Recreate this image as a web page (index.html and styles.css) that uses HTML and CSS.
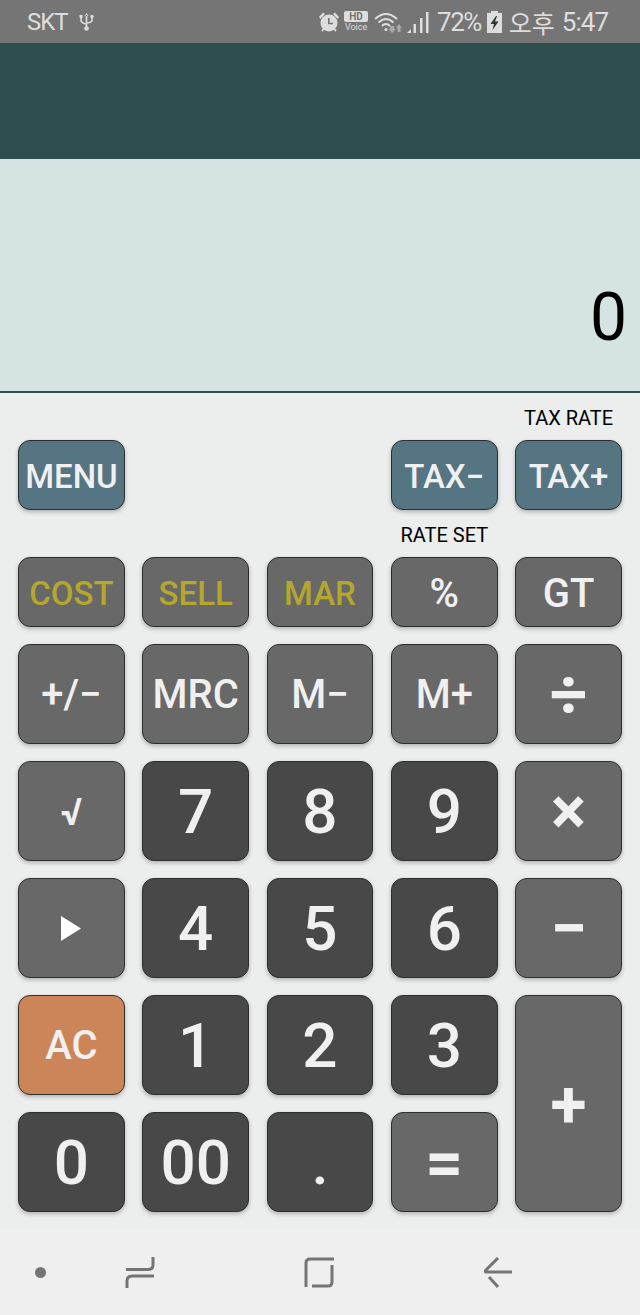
FILE: index.html
```html
<!DOCTYPE html>
<html lang="en">
<head>
  <meta charset="UTF-8" />
  <title>Tax Calculator</title>
  <link rel="stylesheet" href="styles.css">
</head>
<body>
  <div class="status-bar">
    <div class="status-left">
      <span class="carrier">SKT</span>
      <svg class="usb" width="15" height="20" viewBox="0 0 15 20">
        <path d="M7.5 1 L5.5 4 H9.5 Z M6.7 3 H8.3 V15 H6.7 Z" fill="#ddd"/>
        <circle cx="7.5" cy="16.5" r="2.3" fill="#ddd"/>
        <path d="M2 5 V8 Q2 11 7 12 M13 5 V8 Q13 10.500 8 11" fill="none" stroke="#ddd" stroke-width="1.600"/>
        <rect x="0.500" y="3" width="3" height="3" fill="#ddd"/>
        <circle cx="13" cy="4.500" r="1.700" fill="#ddd"/>
      </svg>
    </div>
    <div class="status-right">
      <svg class="alarm" width="22" height="22" viewBox="0 0 22 22">
        <circle cx="11" cy="12" r="8.500" fill="#ddd"/>
        <path d="M1 6 L5 1.500 L7 3 L2.500 8 Z M21 6 L17 1.500 L15 3 L19.500 8 Z M3.500 19 L5.500 17 L6.500 18 L4.500 21 Z M18.500 19 L16.500 17 L15.500 18 L17.500 21 Z" fill="#ddd"/>
        <path d="M10.800 7 V12.500 H15" fill="none" stroke="#757575" stroke-width="1.600"/>
      </svg>
      <div class="hd">
        <span class="hd-box">HD</span>
        <span class="hd-voice">Voice</span>
      </div>
      <svg class="wifi" width="28" height="22" viewBox="0 0 28 22">
        <path d="M1 8 Q12 -2 23 8 M4.500 11.500 Q12 4.500 19.500 11.500 M8 15 Q12 11 16 15" fill="none" stroke="#ddd" stroke-width="2"/>
        <circle cx="12" cy="18.500" r="1.600" fill="#ddd"/>
        <path d="M16 15 H20 V18 H22 L18 22 L14.500 18 H16 Z" fill="#aaa"/>
        <path d="M25 13 L28 17 H26.500 V21 H23.500 V17 H22 Z" fill="#aaa"/>
      </svg>
      <svg class="signal" width="22" height="22" viewBox="0 0 22 22">
        <path d="M0 22 L4 18 V22 Z" fill="#ddd"/>
        <rect x="6.500" y="13" width="2.500" height="9" fill="#ddd"/>
        <rect x="13" y="7" width="2.500" height="15" fill="#ddd"/>
        <rect x="19" y="1" width="2.500" height="21" fill="#ddd"/>
      </svg>
      <span class="battery-text">72%</span>
      <svg class="battery" width="15" height="22" viewBox="0 0 15 22">
        <path d="M4 0 H11 V2 H15 V22 H0 V2 H4 Z" fill="#ddd"/>
        <path d="M9 5 L3.500 13 H7 L5.500 19 L11.500 10.500 H8 L10 5 Z" fill="#333"/>
      </svg>
      <span class="ampm">오후</span>
      <span class="clock">5:47</span>
    </div>
  </div>

  <div class="app-bar"></div>
  <div class="display">0</div>

  <div class="keypad">
    <div class="keys-top">
      <span class="key-label tax-rate">TAX RATE</span>
      <button class="key blue small menu">MENU</button>
      <button class="key blue small tax-minus">TAX&#8722;</button>
      <button class="key blue small">TAX+</button>
      <span class="key-label rate-set">RATE SET</span>
      <button class="key gray small gold cost">COST</button>
      <button class="key gray small gold">SELL</button>
      <button class="key gray small gold">MAR</button>
      <button class="key gray mid">%</button>
      <button class="key gray mid">GT</button>
    </div>

    <div class="keys-main">
      <button class="key gray mid">+/&#8722;</button>
      <button class="key gray mid">MRC</button>
      <button class="key gray mid">M&#8722;</button>
      <button class="key gray mid">M+</button>
      <button class="key gray sign">&#247;</button>

      <button class="key gray root">&#8730;</button>
      <button class="key dark num">7</button>
      <button class="key dark num">8</button>
      <button class="key dark num">9</button>
      <button class="key gray sign">&#215;</button>

      <button class="key gray">
        <svg width="20" height="25" viewBox="0 0 20 25"><path d="M0 0 L20 12.500 L0 25 Z" fill="#fff"/></svg>
      </button>
      <button class="key dark num">4</button>
      <button class="key dark num">5</button>
      <button class="key dark num">6</button>
      <button class="key gray sign">&#8722;</button>

      <button class="key orange mid">AC</button>
      <button class="key dark num">1</button>
      <button class="key dark num">2</button>
      <button class="key dark num">3</button>
      <button class="key gray sign tall">+</button>

      <button class="key dark num">0</button>
      <button class="key dark num">00</button>
      <button class="key dark num">.</button>
      <button class="key gray sign">=</button>
    </div>
  </div>

  <div class="nav-bar">
    <span class="nav-dot"></span>
    <svg class="nav-recent" width="30" height="33" viewBox="0 0 30 33">
      <path d="M1 13.500 H23 Q28 13.500 28 9 V1 M29 20 H7 Q2 20 2 25 V32" fill="none" stroke="#757575" stroke-width="3"/>
    </svg>
    <svg class="nav-home" width="30" height="31" viewBox="0 0 30 31">
      <path d="M30 2 H6 Q2 2 2 6 V30 M8 29 H24 Q28 29 28 25 V8" fill="none" stroke="#757575" stroke-width="3"/>
    </svg>
    <svg class="nav-back" width="30" height="31" viewBox="0 0 30 31">
      <path d="M15 1 L3 13 Q1.500 15 3 15 H29 M6 20 L15 30" fill="none" stroke="#757575" stroke-width="3"/>
    </svg>
  </div>
</body>
</html>
```

FILE: styles.css
```css
* {
  box-sizing: border-box;
}
body {
  font-family: Roboto, sans-serif;
  background-color: #ebeeed;
  margin: 0;
  padding: 0;
  height: 1315px;
  display: flex;
  flex-direction: column;
  overflow: hidden;
}
.status-bar {
  height: 43px;
  background-color: #757575;
  color: #ddd;
  display: flex;
  justify-content: space-between;
  align-items: center;
  padding: 0 32px 0 27px;
}
.status-left, .status-right {
  display: flex;
  align-items: center;
}
.carrier {
  font-size: 24px;
  letter-spacing: -1px;
}
.usb {
  margin-left: 11px;
}
.hd {
  display: flex;
  flex-direction: column;
  align-items: center;
  margin-left: 4px;
  width: 24px;
}
.hd-box {
  background-color: #ddd;
  color: #757575;
  font-size: 10px;
  font-weight: 700;
  line-height: 11px;
  width: 24px;
  text-align: center;
  border-radius: 2px;
}
.hd-voice {
  font-size: 9px;
  line-height: 11px;
}
.wifi {
  margin-left: 6px;
}
.signal {
  margin-left: 5px;
}
.battery-text {
  font-size: 26px;
  letter-spacing: -1.5px;
  margin-left: 8px;
}
.battery {
  margin-left: 6px;
}
.ampm {
  font-family: "Noto Sans CJK KR", sans-serif;
  font-size: 25px;
  margin-left: 7px;
}
.clock {
  font-size: 26px;
  letter-spacing: -1px;
  margin-left: 7px;
}
.app-bar {
  height: 116px;
  background-color: #2f4f4f;
}
.display {
  height: 234px;
  background-color: #d5e3e3;
  border-bottom: 2px solid #2f4f4f;
  color: #000;
  font-size: 66px;
  text-align: right;
  line-height: 80px;
  padding: 119px 13px 0 0;
}
.keypad {
  height: 837px;
  padding: 0 18px;
  flex: none;
}
.keys-top, .keys-main {
  display: grid;
  grid-template-columns: repeat(5, 1fr);
  column-gap: 17.5px;
}
.keys-top {
  grid-template-rows: 47px 70px 47px 70px;
}
.keys-main {
  grid-template-rows: repeat(5, 99.5px);
  row-gap: 17.5px;
  margin-top: 17px;
}
.key-label {
  font-size: 20px;
  line-height: 24px;
  color: #000;
  text-align: center;
  align-self: end;
  margin-bottom: 10px;
  white-space: nowrap;
}
.tax-rate {
  grid-column: 5;
}
.menu {
  grid-column: 1;
}
.tax-minus {
  grid-column: 4;
}
.rate-set {
  grid-column: 4;
}
.cost {
  grid-column: 1;
}
.key {
  border: 1px solid #2e2e2e;
  border-radius: 12px;
  box-shadow: 0 2px 4px rgba(0, 0, 0, 0.25);
  color: #f0f0f0;
  font-family: Roboto, sans-serif;
  font-weight: 500;
  padding: 2px 0 0;
  display: flex;
  align-items: center;
  justify-content: center;
  white-space: nowrap;
  overflow: hidden;
}
.blue {
  background-color: #567583;
}
.gray {
  background-color: #686868;
}
.dark {
  background-color: #484848;
}
.orange {
  background-color: #cc8558;
}
.gold {
  color: #b5a62e;
}
.small {
  font-size: 33px;
}
.mid {
  font-size: 40px;
}
.num {
  font-size: 62px;
}
.root {
  font-size: 38px;
  font-weight: 700;
}
.sign {
  font-size: 66px;
  font-weight: 700;
}
.tall {
  grid-column: 5;
  grid-row: 4 / span 2;
}
.nav-bar {
  height: 85px;
  flex: none;
  background-color: #efefef;
  display: flex;
  align-items: center;
  padding-left: 35px;
}
.nav-dot {
  width: 11px;
  height: 11px;
  border-radius: 50%;
  background-color: #757575;
}
.nav-recent {
  margin-left: 79px;
}
.nav-home {
  margin-left: 149px;
}
.nav-back {
  margin-left: 149px;
}
```
